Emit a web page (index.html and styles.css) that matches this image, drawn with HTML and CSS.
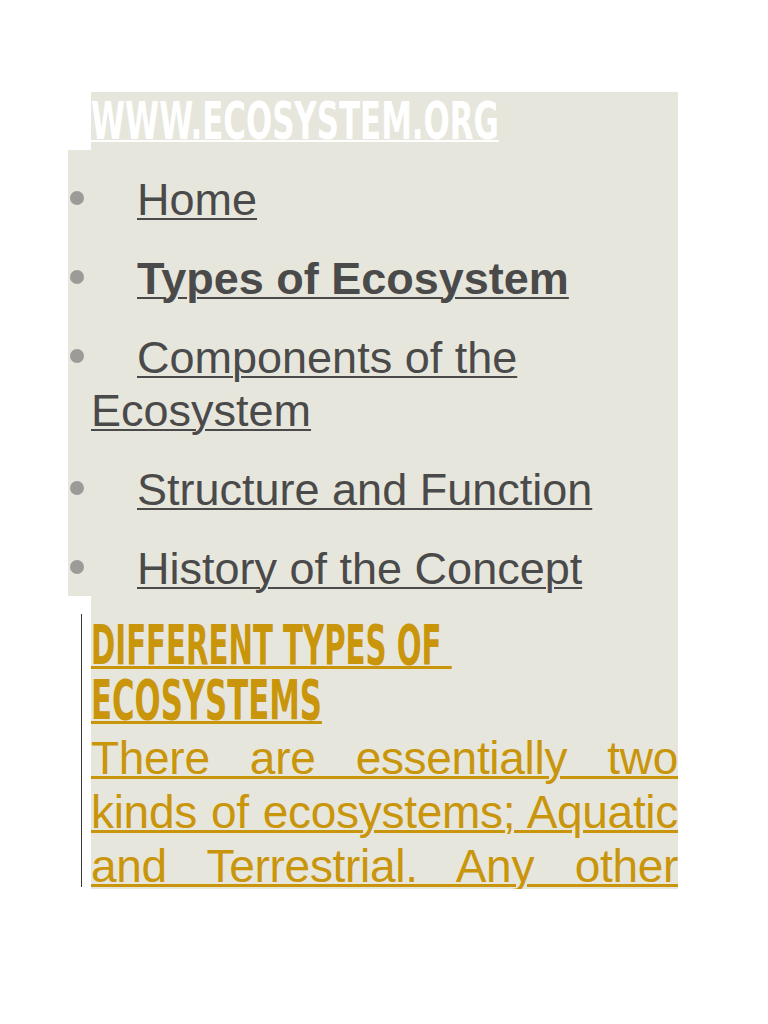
FILE: index.html
```html
<!DOCTYPE html>
<html>
<head>
<meta charset="utf-8">
<title>WWW.ECOSYSTEM.ORG</title>
<link rel="stylesheet" href="styles.css">
</head>
<body>
<div class="page">
  <div class="title-row">
    <div class="title-spacer"></div>
    <div class="title-box"><a class="title" href="#">WWW.ECOSYSTEM.ORG</a></div>
  </div>
  <ul class="nav">
    <li><a href="#">Home</a></li>
    <li><a class="strong" href="#">Types of Ecosystem</a></li>
    <li><a href="#">Components of the Ecosystem</a></li>
    <li><a href="#">Structure and Function</a></li>
    <li><a href="#">History of the Concept</a></li>
  </ul>
  <div class="section">
    <div class="rule"></div>
    <div class="content">
      <h2 class="heading"><a href="#"><span class="hline hline-1">DIFFERENT TYPES OF&nbsp;</span><span class="hline hline-2">ECOSYSTEMS</span></a></h2>
      <p class="body"><a href="#">There are essentially two kinds of ecosystems; Aquatic and Terrestrial. Any other</a></p>
    </div>
  </div>
</div>
</body>
</html>
```
FILE: styles.css
```css
html, body {
  margin: 0;
  padding: 0;
  background: #ffffff;
}
body {
  font-family: "Liberation Sans", Arial, sans-serif;
}
.page {
  margin: 92px 0 0 68px;
  width: 610px;
}
.title-row {
  display: flex;
  height: 58px;
}
.title-spacer {
  flex: 0 0 23px;
  background: #ffffff;
}
.title-box {
  flex: 1 1 0;
  min-width: 0;
  background: #e7e6dc;
  line-height: 58px;
  white-space: nowrap;
}
.title {
  display: inline-block;
  font-family: "Liberation Sans Narrow", "DejaVu Sans Condensed", sans-serif;
  font-stretch: condensed;
  font-weight: bold;
  font-size: 52px;
  color: #ffffff;
  text-decoration: underline;
  text-decoration-thickness: 2px;
  transform: scaleX(0.66);
  transform-origin: left center;
}
.nav {
  list-style: none;
  margin: 0;
  padding: 23px 0 1px 23px;
  background: #e7e6dc;
  font-size: 45px;
  line-height: 53px;
}
.nav li {
  margin: 0 0 26px 0;
  color: #4a4a4a;
}
.nav li:last-child {
  margin-bottom: 0;
}
.nav li::before {
  content: "";
  display: inline-block;
  width: 14px;
  height: 14px;
  border-radius: 50%;
  background: #9c9b98;
  margin-left: -21px;
  margin-right: 53px;
  vertical-align: 10px;
}
.nav a {
  color: #4a4a4a;
  text-decoration: underline;
  text-decoration-thickness: 2px;
  text-underline-offset: 3px;
}
.nav a.strong {
  font-weight: bold;
}
.section {
  display: flex;
  height: 293px;
}
.rule {
  flex: 0 0 1px;
  margin: 18px 9px 2px 13px;
  background: #3a3a3a;
}
.content {
  flex: 1 1 0;
  min-width: 0;
  background: #e7e6dc;
  padding-top: 21px;
}
.heading {
  margin: 0;
  font-family: "Liberation Sans Narrow", "DejaVu Sans Condensed", sans-serif;
  font-stretch: condensed;
  font-weight: bold;
  font-size: 56px;
  line-height: 55px;
  white-space: nowrap;
}
.heading a {
  color: #c9950b;
  text-decoration: none;
}
.hline {
  display: block;
  width: max-content;
  text-decoration: underline;
  text-decoration-thickness: 3px;
  transform-origin: left center;
}
.hline-1 {
  transform: scaleX(0.58);
}
.hline-2 {
  transform: scaleX(0.61);
}
.body {
  margin: 4px 0 0 0;
  font-size: 46px;
  line-height: 54px;
  letter-spacing: -0.3px;
  text-align: justify;
  text-align-last: justify;
}
.body a {
  color: #c9950b;
  text-decoration: underline;
  text-decoration-thickness: 3px;
  text-underline-offset: 2px;
}
```
